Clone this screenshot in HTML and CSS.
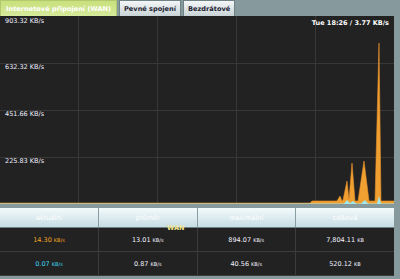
FILE: index.html
```html
<!DOCTYPE html>
<html>
	<head>
		<meta charset="UTF-8"/>
		<title>Router | Bandwidth</title>
		<link rel="stylesheet" href="styles.css">
	</head>
	<body>
		<div class="tabs">
			<div class="tab active">Internetové připojení (WAN)</div>
			<div class="tab">Pevné spojení</div>
			<div class="tab">Bezdrátové</div>
		</div>

		<div class="chart">
			<svg width="394" height="188" viewBox="0 0 394 188">
				<rect width="394" height="188" fill="#222"/>
				<g stroke="#383838" stroke-width="1">
					<line x1="78.5" y1="0" x2="78.5" y2="188"/>
					<line x1="157.5" y1="0" x2="157.5" y2="188"/>
					<line x1="236.5" y1="0" x2="236.5" y2="188"/>
					<line x1="315.5" y1="0" x2="315.5" y2="188"/>
					<line x1="0" y1="47.5" x2="394" y2="47.5"/>
					<line x1="0" y1="94.5" x2="394" y2="94.5"/>
					<line x1="0" y1="141.5" x2="394" y2="141.5"/>
				</g>
				<path d="M0 187 L310 187 L312 185 L337 185 L340 180 L342 185 L343 184 L347 165 L349 184 L352 147 L355 185 L358 185 L364 145 L369 185 L375 185 L379 27 L381 185 L394 185 L394 188 L0 188 Z" fill="#f0a030" stroke="#e8902a" stroke-width="0.6"/>
				<path d="M0 187.5 L344 187.5 L347 184 L350 187 L353 185 L356 187.5 L361 187.5 L365 184 L368 187.5 L377 187.5 L379 180 L381 187.5 L394 187.5 L394 188 L0 188 Z" fill="#a0e8ec"/>
			</svg>
			<span class="axis" style="top: 1px">903.32 KB/s</span>
			<span class="axis" style="top: 47px">632.32 KB/s</span>
			<span class="axis" style="top: 94px">451.66 KB/s</span>
			<span class="axis" style="top: 141px">225.83 KB/s</span>
			<span class="now">Tue 18:26 / 3.77 KB/s</span>
		</div>

		<div class="stats">
			<span class="caption">WAN</span>
			<table>
				<thead>
					<tr>
						<th>aktuální</th>
						<th>průměr</th>
						<th>maximální</th>
						<th>celková</th>
					</tr>
				</thead>
				<tbody>
					<tr class="rx">
						<td class="first">14.30 <small>KB/s</small></td>
						<td>13.01 <small>KB/s</small></td>
						<td>894.07 <small>KB/s</small></td>
						<td>7,804.11 <small>KB</small></td>
					</tr>
					<tr class="tx">
						<td class="first">0.07 <small>KB/s</small></td>
						<td>0.87 <small>KB/s</small></td>
						<td>40.56 <small>KB/s</small></td>
						<td>520.12 <small>KB</small></td>
					</tr>
				</tbody>
			</table>
		</div>
	</body>
</html>
```

FILE: styles.css
```css
body {
	margin: 0;
	padding: 0;
	background: #86999d;
	font-family: 'DejaVu Sans', Verdana, sans-serif;
	color: #fff;
	width: 400px;
	height: 279px;
	overflow: hidden;
}

.tabs {
	display: flex;
	gap: 2px;
	height: 16px;
}

.tab {
	padding: 0 4px;
	font-size: 6.6px;
	font-weight: bold;
	line-height: 16px;
	white-space: nowrap;
	color: #223;
	background: linear-gradient(#f4f6f7, #c9d3d6);
	border: 1px solid #6f8286;
	border-bottom: none;
	box-sizing: border-box;
}

.tab.active {
	padding: 0 5px;
	color: #fff;
	background: linear-gradient(#c8e07c, #d6ea9c);
	border-color: #b3c96d;
}

.chart {
	position: relative;
	width: 394px;
	height: 188px;
}

.chart svg {
	display: block;
}

.axis {
	position: absolute;
	left: 5px;
	font-size: 6.5px;
	color: #eef;
	white-space: nowrap;
}

.now {
	position: absolute;
	right: 5px;
	top: 3px;
	font-size: 6.5px;
	font-weight: bold;
	color: #fff;
}

.stats {
	position: relative;
	margin-top: 4px;
	width: 394px;
}

.caption {
	position: absolute;
	left: 167px;
	top: 16px;
	font-size: 6.5px;
	font-weight: bold;
	color: #f4e48a;
}

table {
	width: 100%;
	border-collapse: collapse;
	table-layout: fixed;
	font-size: 6.5px;
}

th {
	height: 19px;
	padding: 0;
	font-weight: normal;
	color: #fff;
	background: linear-gradient(#f4fafb, #c6dde4);
	border-left: 1px solid #8a9da1;
	border-bottom: 1px solid #6f8286;
}

th:first-child {
	border-left: none;
}

td {
	height: 23px;
	padding: 0;
	text-align: center;
	background: #222;
	border-left: 1px solid #3c3c3c;
	border-bottom: 1px solid #3c3c3c;
	color: #f2f2ff;
}

td:first-child {
	border-left: none;
}

td small {
	font-size: 5px;
}

.rx .first {
	color: #f4a424;
}

.tx .first {
	color: #3fd4f2;
}
```
